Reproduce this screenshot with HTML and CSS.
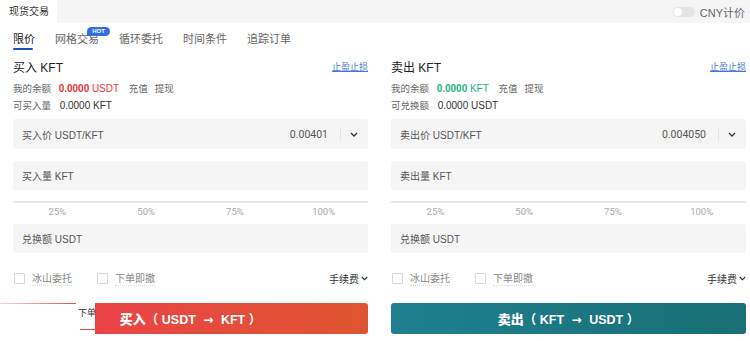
FILE: index.html
```html
<!DOCTYPE html>
<html lang="zh-CN">
<head>
    <meta charset="UTF-8">
    <meta name="viewport" content="width=device-width, initial-scale=1.0">
    <title>现货交易</title>
    <link rel="stylesheet" href="styles.css">
</head>
<body>
    <div class="topbar">
        <div class="top-tab">现货交易</div>
        <div class="cny"><span class="switch"><span class="knob"></span></span>CNY计价</div>
    </div>

    <div class="tabs">
        <span class="tab active">限价</span>
        <span class="tab">网格交易<span class="hot">HOT</span></span>
        <span class="tab">循环委托</span>
        <span class="tab">时间条件</span>
        <span class="tab">追踪订单</span>
    </div>

    <div class="panels">
        <!-- buy side -->
        <div class="panel">
            <div class="head">
                <span class="title">买入 KFT</span>
                <a class="link" href="#">止盈止损</a>
            </div>
            <div class="balance">
                我的余额 <b class="num red">0.0000</b> <span class="red">USDT</span>
                <span class="act">充值</span><span class="act">提现</span>
            </div>
            <div class="avail">可买入量 <span class="amt">0.0000 KFT</span></div>

            <div class="field">
                <span class="label">买入价 USDT/KFT</span>
                <span class="value">0.00401</span>
                <span class="sep"></span>
                <svg class="chev" width="8" height="5" viewBox="0 0 8 5"><path d="M1 1l3 3 3-3" fill="none" stroke="#333" stroke-width="1.3"/></svg>
            </div>
            <div class="field second">
                <span class="label">买入量 KFT</span>
            </div>

            <div class="slider">
                <div class="track"></div>
                <div class="marks"><span>25%</span><span>50%</span><span>75%</span><span>100%</span></div>
            </div>

            <div class="field">
                <span class="label">兑换额 USDT</span>
            </div>

            <div class="options">
                <label class="check"><span class="box"></span><span class="txt">冰山委托</span></label>
                <label class="check"><span class="box"></span><span class="txt">下单即撤</span></label>
                <span class="fee">手续费<svg width="7" height="5" viewBox="0 0 7 5"><path d="M0.8 1l2.7 2.7L6.2 1" fill="none" stroke="#333" stroke-width="1.1"/></svg></span>
            </div>

            <div class="btn-wrap">
                <button class="btn buy"><b>买入</b>（ USDT <span class="arrow">→</span> KFT ）</button>
                <div class="glitch">
                    <span class="line-top"></span>
                    <span class="glitch-text">下单</span>
                    <span class="line-bottom"></span>
                </div>
            </div>
        </div>

        <!-- sell side -->
        <div class="panel">
            <div class="head">
                <span class="title">卖出 KFT</span>
                <a class="link" href="#">止盈止损</a>
            </div>
            <div class="balance">
                我的余额 <b class="num green">0.0000</b> <span class="green">KFT</span>
                <span class="act">充值</span><span class="act">提现</span>
            </div>
            <div class="avail">可兑换额 <span class="amt">0.0000 USDT</span></div>

            <div class="field">
                <span class="label">卖出价 USDT/KFT</span>
                <span class="value">0.004050</span>
                <span class="sep"></span>
                <svg class="chev" width="8" height="5" viewBox="0 0 8 5"><path d="M1 1l3 3 3-3" fill="none" stroke="#333" stroke-width="1.3"/></svg>
            </div>
            <div class="field second">
                <span class="label">卖出量 KFT</span>
            </div>

            <div class="slider">
                <div class="track"></div>
                <div class="marks"><span>25%</span><span>50%</span><span>75%</span><span>100%</span></div>
            </div>

            <div class="field">
                <span class="label">兑换额 USDT</span>
            </div>

            <div class="options">
                <label class="check"><span class="box"></span><span class="txt">冰山委托</span></label>
                <label class="check"><span class="box"></span><span class="txt">下单即撤</span></label>
                <span class="fee">手续费<svg width="7" height="5" viewBox="0 0 7 5"><path d="M0.8 1l2.7 2.7L6.2 1" fill="none" stroke="#333" stroke-width="1.1"/></svg></span>
            </div>

            <div class="btn-wrap">
                <button class="btn sell"><b>卖出</b>（ KFT <span class="arrow">→</span> USDT ）</button>
            </div>
        </div>
    </div>
</body>
</html>
```

FILE: styles.css
```css
body {
    margin: 0;
    font-family: "Liberation Sans", "Noto Sans CJK SC", sans-serif;
    background-color: #fff;
    color: #333;
    width: 750px;
    overflow: hidden;
}

.topbar {
    height: 23px;
    background-color: #f5f5f5;
    display: flex;
    justify-content: space-between;
    align-items: center;
}

.top-tab {
    height: 23px;
    line-height: 23px;
    padding: 0 8px 0 9px;
    background-color: #fff;
    font-size: 10px;
    color: #333;
}

.cny {
    display: flex;
    align-items: center;
    font-size: 11px;
    color: #666;
    padding-right: 5px;
}

.switch {
    width: 22px;
    height: 10px;
    border-radius: 5px;
    background-color: #e4e4e4;
    margin-right: 5px;
    position: relative;
}

.knob {
    position: absolute;
    left: 1px;
    top: 1px;
    width: 8px;
    height: 8px;
    border-radius: 50%;
    background-color: #fff;
}

.tabs {
    display: flex;
    gap: 20px;
    padding: 5px 13px 0;
    height: 22px;
}

.tab {
    position: relative;
    height: 22px;
    line-height: 22px;
    font-size: 11px;
    color: #666;
}

.tab.active {
    color: #222;
}

.tab.active::after {
    content: "";
    position: absolute;
    left: 0;
    right: 2px;
    bottom: 0;
    height: 2px;
    border-radius: 1px;
    background-color: #1d4fc2;
}

.hot {
    position: absolute;
    left: 32px;
    top: -1px;
    width: 23px;
    height: 9px;
    line-height: 9px;
    border-radius: 5px 5px 5px 0;
    background-color: #2f6fe4;
    color: #fff;
    font-size: 6px;
    font-weight: bold;
    text-align: center;
}

.panels {
    display: grid;
    grid-template-columns: 355px 355px;
    column-gap: 23px;
    padding: 0 4px 0 13px;
}

.head {
    margin-top: 8px;
    height: 16px;
    display: flex;
    justify-content: space-between;
    align-items: center;
}

.title {
    font-size: 12px;
    color: #222;
}

.link {
    font-size: 9px;
    color: #4a77d2;
    text-decoration: underline;
}

.balance {
    margin-top: 8px;
    height: 14px;
    line-height: 14px;
    font-size: 9.5px;
    color: #666;
}

.balance .num {
    font-size: 10px;
    margin-left: 5px;
}

.balance .num + span {
    font-size: 10px;
}

.red {
    color: #e5333d;
}

.green {
    color: #1fb27c;
}

.act {
    margin-left: 7px;
    color: #666;
}

.avail {
    margin-top: 3px;
    height: 14px;
    line-height: 14px;
    font-size: 9.5px;
    color: #666;
}

.avail .amt {
    margin-left: 6px;
    color: #333;
    font-size: 10px;
}

.field {
    margin-top: 6px;
    height: 30px;
    background-color: #f5f5f5;
    border-radius: 3px;
    display: flex;
    align-items: center;
    padding: 0 10px 0 9px;
    font-size: 10px;
    color: #555;
}

.field.second {
    margin-top: 12px;
    height: 29px;
}

.field .label {
    flex: 1;
}

.field .value {
    font-family: Roboto, "Liberation Sans", sans-serif;
    font-size: 10.5px;
    color: #555;
}

.sep {
    width: 1px;
    height: 14px;
    background-color: #e6e6e6;
    margin: 0 9px 0 12px;
}

.slider {
    margin-top: 11px;
}

.track {
    height: 2px;
    background-color: #e9e9e9;
}

.marks {
    display: grid;
    grid-template-columns: repeat(4, 1fr);
    text-align: center;
    margin-top: 3px;
    line-height: 12px;
    font-family: Roboto, "Liberation Sans", sans-serif;
    font-size: 9.5px;
    color: #aaa;
}

.slider + .field {
    margin-top: 6px;
    height: 29px;
}

.options {
    margin-top: 18px;
    height: 14px;
    display: flex;
    align-items: center;
    font-size: 10px;
}

.check {
    display: flex;
    align-items: center;
    margin-right: 24px;
}

.box {
    width: 9px;
    height: 9px;
    border: 1px solid #d9d9d9;
    border-radius: 1px;
    margin: 0 7px 0 1px;
}

.check .txt {
    color: #888;
    border-bottom: 1px dotted #ddd;
}

.fee {
    margin-left: auto;
    color: #333;
    display: flex;
    align-items: center;
    gap: 2px;
}

.btn-wrap {
    position: relative;
    margin-top: 18px;
}

.btn {
    display: block;
    width: 100%;
    height: 31px;
    border: none;
    border-radius: 3px;
    color: #fff;
    font-family: "Liberation Sans", "Noto Sans CJK SC", sans-serif;
    font-size: 12.5px;
    font-weight: bold;
    cursor: pointer;
}

.btn b {
    font-size: 13px;
}

.btn .arrow {
    font-family: "DejaVu Sans", sans-serif;
    font-size: 12px;
    margin: 0 4px;
}

.btn.buy {
    background: linear-gradient(90deg, #ee3e4e, #df5530);
}

.btn.sell {
    background: linear-gradient(90deg, #1f7f90, #186f74);
}

/* half-drawn overlay left over the buy button */
.glitch {
    position: absolute;
    left: -13px;
    top: 0;
    width: 95px;
    height: 31px;
    background-color: #fff;
}

.line-top {
    position: absolute;
    left: 0;
    top: 0;
    width: 76px;
    height: 1px;
    background: linear-gradient(90deg, rgba(229, 60, 70, 0.2), #e54a52);
}

.glitch-text {
    position: absolute;
    left: 78px;
    top: 3px;
    font-size: 9px;
    color: #333;
    white-space: nowrap;
}

.line-bottom {
    position: absolute;
    left: 80px;
    top: 26px;
    width: 15px;
    height: 1px;
    background-color: #e54a52;
}
```
